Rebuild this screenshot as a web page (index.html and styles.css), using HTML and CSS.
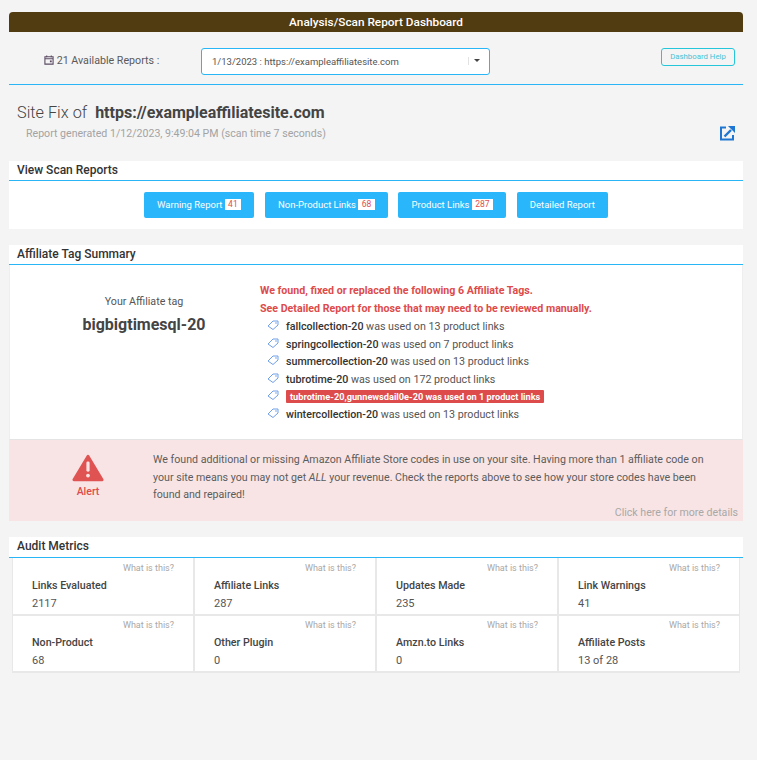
FILE: index.html
```html
<!DOCTYPE html>
<html lang="en">
<head>
    <meta charset="UTF-8">
    <meta name="viewport" content="width=device-width, initial-scale=1.0">
    <title>Analysis/Scan Report Dashboard</title>
    <link rel="stylesheet" href="styles.css">
</head>
<body>

    <!-- Title bar -->
    <div class="title-bar">Analysis/Scan Report Dashboard</div>

    <!-- Report picker row -->
    <div class="picker-row">
        <div class="picker-label">
            <svg class="calendar-icon" width="10" height="10" viewBox="0 0 11 11"><path d="M1 2h9v8H1z M1 4.2h9" fill="none" stroke="#5b4a63" stroke-width="1.2"/><path d="M3 .5v2M8 .5v2" stroke="#5b4a63" stroke-width="1.2"/><rect x="6.5" y="6" width="2" height="2" fill="#5b4a63"/></svg>
            21 Available Reports :
        </div>
        <div class="picker-select">
            <span class="picker-value">1/13/2023 : https://exampleaffiliatesite.com</span>
            <span class="picker-arrow"></span>
        </div>
        <a class="help-button">Dashboard Help</a>
    </div>

    <!-- Site heading -->
    <div class="site-head">
        <div class="site-title">Site Fix of <b>https://exampleaffiliatesite.com</b></div>
        <div class="site-sub">
            <span>Report generated 1/12/2023, 9:49:04 PM (scan time 7 seconds)</span>
            <svg class="open-icon" width="15" height="15" viewBox="0 0 15 15"><path d="M6 1.5H1v12h12V9" fill="none" stroke="#1f76d2" stroke-width="2"/><path d="M8 0H15V7Z" fill="#1f76d2"/><path d="M4.5 10.5L11 4" stroke="#1f76d2" stroke-width="2.4"/></svg>
        </div>
    </div>

    <!-- Scan reports -->
    <div class="panel reports-panel">
        <div class="panel-header">View Scan Reports</div>
        <div class="report-buttons">
            <a class="report-button">Warning Report <span class="count">41</span></a>
            <a class="report-button">Non-Product Links <span class="count">68</span></a>
            <a class="report-button">Product Links <span class="count">287</span></a>
            <a class="report-button">Detailed Report</a>
        </div>
    </div>

    <!-- Affiliate tags -->
    <div class="panel tags-panel">
        <div class="panel-header">Affiliate Tag Summary</div>
        <div class="tags-body">
            <div class="your-tag">
                <div class="your-tag-label">Your Affiliate tag</div>
                <div class="your-tag-name">bigbigtimesql-20</div>
            </div>
            <div class="tag-info">
                <div class="tag-warning">We found, fixed or replaced the following 6 Affiliate Tags.</div>
                <div class="tag-warning">See Detailed Report for those that may need to be reviewed manually.</div>
                <ul class="tag-list">
                    <li><svg class="tag-icon" viewBox="0 0 12 10"><path d="M1 6l5-5h5v4l-5 4.5z" fill="none" stroke="#6f9fe8"/><circle cx="9" cy="3" r=".8" fill="#6f9fe8"/></svg><span><b>fallcollection-20</b> was used on 13 product links</span></li>
                    <li><svg class="tag-icon" viewBox="0 0 12 10"><path d="M1 6l5-5h5v4l-5 4.5z" fill="none" stroke="#6f9fe8"/><circle cx="9" cy="3" r=".8" fill="#6f9fe8"/></svg><span><b>springcollection-20</b> was used on 7 product links</span></li>
                    <li><svg class="tag-icon" viewBox="0 0 12 10"><path d="M1 6l5-5h5v4l-5 4.5z" fill="none" stroke="#6f9fe8"/><circle cx="9" cy="3" r=".8" fill="#6f9fe8"/></svg><span><b>summercollection-20</b> was used on 13 product links</span></li>
                    <li><svg class="tag-icon" viewBox="0 0 12 10"><path d="M1 6l5-5h5v4l-5 4.5z" fill="none" stroke="#6f9fe8"/><circle cx="9" cy="3" r=".8" fill="#6f9fe8"/></svg><span><b>tubrotime-20</b> was used on 172 product links</span></li>
                    <li><svg class="tag-icon" viewBox="0 0 12 10"><path d="M1 6l5-5h5v4l-5 4.5z" fill="none" stroke="#6f9fe8"/><circle cx="9" cy="3" r=".8" fill="#6f9fe8"/></svg><span class="tag-bad">tubrotime-20,gunnewsdail0e-20 was used on 1 product links</span></li>
                    <li><svg class="tag-icon" viewBox="0 0 12 10"><path d="M1 6l5-5h5v4l-5 4.5z" fill="none" stroke="#6f9fe8"/><circle cx="9" cy="3" r=".8" fill="#6f9fe8"/></svg><span><b>wintercollection-20</b> was used on 13 product links</span></li>
                </ul>
            </div>
        </div>
        <div class="alert-box">
            <div class="alert-side">
                <svg width="32" height="30" viewBox="0 0 34 30"><path d="M17 2.5L32 27.5H2Z" fill="#df5353" stroke="#df5353" stroke-width="3" stroke-linejoin="round"/><rect x="15.3" y="8" width="3.4" height="11" rx="1.5" fill="#f8e4e4"/><circle cx="17" cy="23" r="2" fill="#f8e4e4"/></svg>
                <div class="alert-word">Alert</div>
            </div>
            <div class="alert-text">We found additional or missing Amazon Affiliate Store codes in use on your site. Having more than 1 affiliate code on your site means you may not get <i>ALL</i> your revenue. Check the reports above to see how your store codes have been found and repaired!</div>
            <a class="alert-more">Click here for more details</a>
        </div>
    </div>

    <!-- Metrics -->
    <div class="panel-header metrics-header">Audit Metrics</div>
    <div class="metrics">
        <div class="metric"><a class="what">What is this?</a><div class="metric-name">Links Evaluated</div><div class="metric-value">2117</div></div>
        <div class="metric"><a class="what">What is this?</a><div class="metric-name">Affiliate Links</div><div class="metric-value">287</div></div>
        <div class="metric"><a class="what">What is this?</a><div class="metric-name">Updates Made</div><div class="metric-value">235</div></div>
        <div class="metric"><a class="what">What is this?</a><div class="metric-name">Link Warnings</div><div class="metric-value">41</div></div>
        <div class="metric"><a class="what">What is this?</a><div class="metric-name">Non-Product</div><div class="metric-value">68</div></div>
        <div class="metric"><a class="what">What is this?</a><div class="metric-name">Other Plugin</div><div class="metric-value">0</div></div>
        <div class="metric"><a class="what">What is this?</a><div class="metric-name">Amzn.to Links</div><div class="metric-value">0</div></div>
        <div class="metric"><a class="what">What is this?</a><div class="metric-name">Affiliate Posts</div><div class="metric-value">13 of 28</div></div>
    </div>

</body>
</html>
```

FILE: styles.css
```css
/* Basic styling for the page */
body {
    font-family: Roboto, Arial, sans-serif;
    font-size: 12px;
    color: #555;
    background-color: #f4f4f4;
    margin: 0;
    padding: 12px 14px 0 9px;
    height: 748px;
    box-sizing: border-box;
    overflow: hidden;
}

/* Title bar */
.title-bar {
    background-color: #513b10;
    color: white;
    height: 20px;
    line-height: 20px;
    text-align: center;
    font-size: 11.8px;
    font-weight: 500;
    border-radius: 4px 4px 0 0;
}

/* Report picker row */
.picker-row {
    height: 36px;
    padding-top: 16px;
    border-bottom: 1px solid #29b6f6;
    display: flex;
    align-items: flex-start;
}
.picker-label {
    width: 192px;
    padding: 6px 0 0 35px;
    box-sizing: border-box;
    font-size: 10.7px;
    color: #5a5a5a;
}
.calendar-icon {
    vertical-align: -1px;
}
.picker-select {
    width: 268px;
    height: 24px;
    background-color: white;
    border: 1px solid #29b6f6;
    border-radius: 3px;
    display: flex;
    align-items: center;
    justify-content: space-between;
    padding: 0 9px 1px 10px;
    font-size: 9.5px;
    color: #555;
}
.picker-arrow {
    border-left: 1px solid #e2e2e2;
    height: 8px;
    width: 11px;
    position: relative;
}
.picker-arrow::after {
    content: "";
    position: absolute;
    top: 2px;
    right: 0;
    border-left: 3px solid transparent;
    border-right: 3px solid transparent;
    border-top: 3px solid #444;
}
.help-button {
    margin-left: auto;
    margin-right: 8px;
    border: 1px solid #26c6da;
    border-radius: 3px;
    color: #45c3d6;
    font-size: 7.8px;
    width: 72px;
    height: 16px;
    line-height: 16px;
    text-align: center;
}

/* Site heading */
.site-head {
    padding: 18px 8px 0 8px;
    height: 76px;
    box-sizing: border-box;
}
.site-title {
    font-size: 16.3px;
    font-weight: 300;
    color: #444;
    line-height: 20px;
}
.site-title b {
    font-weight: 700;
    font-size: 16px;
    margin-left: 4px;
}
.site-sub {
    display: flex;
    justify-content: space-between;
    align-items: flex-start;
    margin-top: 4px;
    padding-left: 9px;
    color: #a3a3a3;
    font-size: 10.6px;
}
.open-icon {
    margin-top: -1px;
}

/* Panels */
.panel {
    background-color: white;
}
.panel-header {
    background-color: white;
    border-bottom: 1px solid #29b6f6;
    height: 19px;
    line-height: 18px;
    padding-left: 8px;
    font-size: 12px;
    font-weight: 500;
    color: #333;
}
.reports-panel {
    height: 68px;
    margin-bottom: 16px;
}
.report-buttons {
    display: flex;
    justify-content: center;
    gap: 10.5px;
    padding-top: 11px;
}
.report-button {
    background-color: #29b6fb;
    color: white;
    border-radius: 2px;
    height: 26px;
    line-height: 25px;
    padding: 0 13.25px;
    font-size: 9.5px;
    white-space: nowrap;
}
.count {
    display: inline-block;
    background-color: white;
    color: #dd5050;
    font-size: 8.5px;
    line-height: 11px;
    padding: 0 3.3px;
    vertical-align: 1px;
}

/* Affiliate tags */
.tags-panel {
    margin-bottom: 16px;
}
.tags-body {
    display: flex;
    height: 175px;
    border-left: 1px solid #eee;
    border-right: 1px solid #eee;
    border-bottom: 1px solid #e4e4e4;
    box-sizing: border-box;
}
.your-tag {
    width: 250px;
    padding: 30px 0 0 18px;
    text-align: center;
    box-sizing: border-box;
}
.your-tag-label {
    font-size: 10.7px;
    line-height: 14px;
}
.your-tag-name {
    font-size: 16px;
    font-weight: 700;
    color: #444;
    margin-top: 6px;
}
.tag-info {
    padding-top: 17px;
}
.tag-warning {
    color: #dd4b4b;
    font-size: 10.65px;
    font-weight: 700;
    line-height: 18px;
}
.tag-list {
    list-style: none;
    margin: 0;
    padding: 0 0 0 7px;
}
.tag-list li {
    display: flex;
    align-items: center;
    height: 17.5px;
    font-size: 10.7px;
    color: #555;
}
.tag-list b {
    font-weight: 500;
    color: #333;
}
.tag-icon {
    width: 12px;
    height: 10px;
    margin-right: 7px;
    margin-top: -3px;
}
.tag-bad {
    background-color: #dd4b4b;
    color: white;
    font-size: 9.2px;
    font-weight: 700;
    padding: 0 4px;
    border-radius: 1px;
    line-height: 13px;
}

/* Alert box */
.alert-box {
    background-color: #f8e4e4;
    height: 81px;
    display: flex;
    position: relative;
}
.alert-side {
    width: 144px;
    flex-shrink: 0;
    text-align: center;
    padding: 13px 0 0 14px;
    box-sizing: border-box;
    line-height: 0;
}
.alert-word {
    color: #dd4b4b;
    font-size: 10.5px;
    font-weight: 500;
    line-height: 14px;
    margin-top: 2px;
}
.alert-text {
    font-size: 10.65px;
    line-height: 17.5px;
    padding-top: 11px;
    color: #5c5c5c;
    width: 556px;
}
.alert-more {
    position: absolute;
    right: 5px;
    bottom: 2px;
    color: #a8a8a8;
    font-size: 10.6px;
}

/* Metrics */
.metrics-header {
    height: 20px;
    line-height: 18px;
}
.metrics {
    display: grid;
    grid-template-columns: repeat(4, 182px);
    padding-left: 3px;
}
.metric {
    background-color: white;
    height: 57.5px;
    border: solid #e8e8e8;
    border-width: 0 1px 2px 1px;
    position: relative;
    padding: 20.6px 0 0 19px;
    box-sizing: border-box;
}
.what {
    position: absolute;
    top: 4.6px;
    right: 19px;
    font-size: 9px;
    color: #a8a8a8;
}
.metric-name {
    font-size: 10.7px;
    font-weight: 500;
    color: #444;
    line-height: 14px;
}
.metric-value {
    font-size: 11px;
    line-height: 14px;
    margin-top: 4px;
    color: #555;
}
```
